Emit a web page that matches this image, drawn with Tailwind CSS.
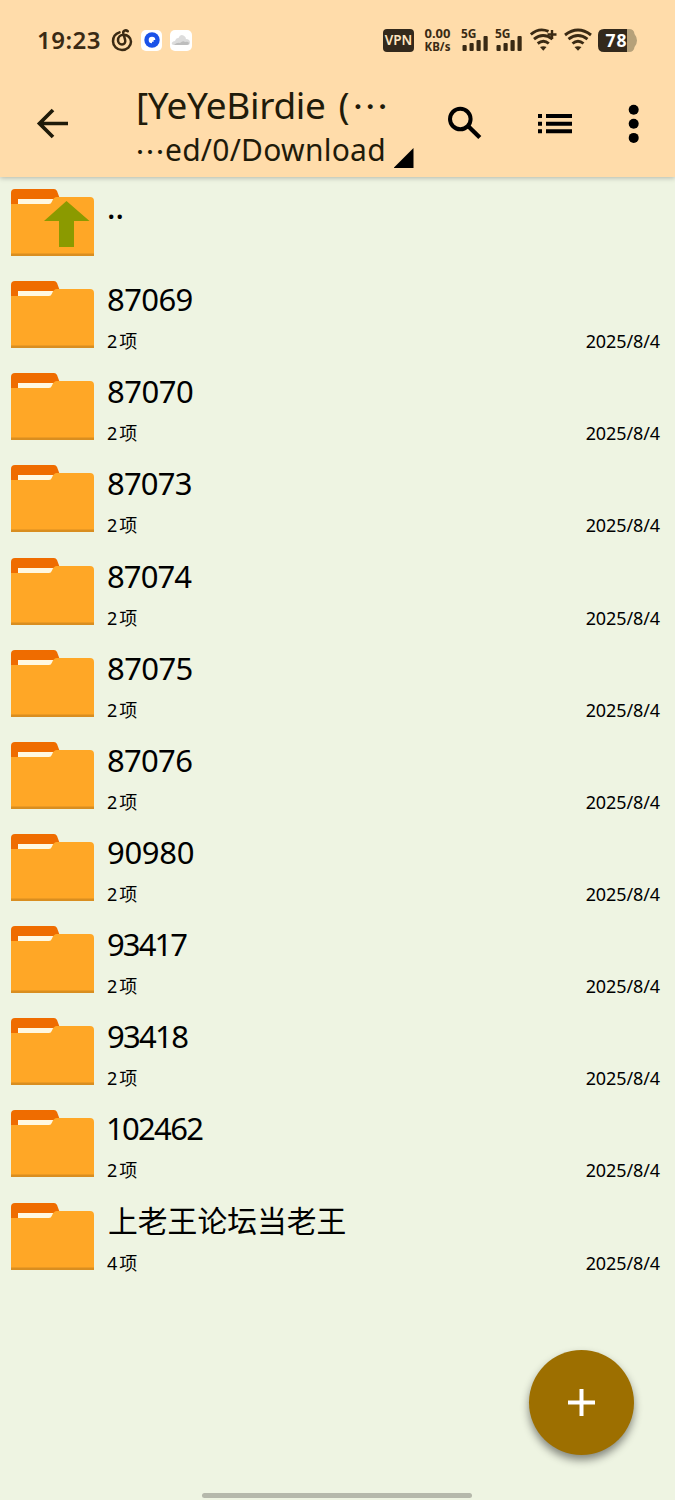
<!DOCTYPE html>
<html lang="zh-CN">
<head>
  <meta charset="UTF-8">
  <meta name="viewport" content="width=device-width, initial-scale=1.0">
  <title>Download</title>
  <script src="https://cdn.jsdelivr.net/npm/@tailwindcss/browser@4"></script>
</head>
<body class="bg-[#eef4e2] font-['Noto_Sans','Noto_Sans_CJK_SC',sans-serif] text-black">
  <div class="relative flex h-[1500px] w-[675px] flex-col overflow-hidden">

    <header class="h-[177px] shrink-0 bg-[#ffdcaa] text-[#1f1b0a] shadow-[0_1px_5px_rgba(0,0,0,0.25)]">
      <!-- Status bar -->
      <div class="flex h-20 items-center pl-[37px] text-[#3a2a14]">
        <span class="w-[74px] whitespace-nowrap text-[24px] font-semibold leading-8 tracking-[0.5px]">19:23</span>
        <svg class="h-[24px] w-[22px] shrink-0" viewBox="0 0 22 24" fill="none" stroke="currentColor" stroke-width="2.5" stroke-linecap="round">
          <path d="M8.500 4.400C4.500 5.700 2 9 2 13.200C2 18.200 6 22 11 22S20 18.300 20 13.800C20 9.600 16.500 6.800 12.800 6.800C9.300 6.800 7 9.300 7 12.200C7 14.600 8.700 16.500 11 16.500S14.700 14.800 14.200 12.300L12.300 5.200C11.800 3 14.500 1.400 16.800 3.200" />
        </svg>
        <div class="ml-[8px] flex h-[21px] w-[21px] items-center justify-center rounded-[5px] bg-white">
          <svg class="h-4 w-4" viewBox="0 0 16 16"><circle cx="8" cy="8" r="7.700" fill="#1a52e8" /><path d="M8 4.700A3.300 3.300 0 1 0 8 11.300V9.800H9.600V8H11.300A3.300 3.300 0 0 0 8 4.700Z" fill="#fff" /></svg>
        </div>
        <div class="ml-2 flex h-[21px] w-[22px] items-center justify-center rounded-[5px] bg-white">
          <svg class="h-3 w-5" viewBox="0 0 20 12"><path d="M3 11Q0 10.500 1 8.500Q2 7 4 7Q5 3.500 7.500 4Q9 0 12.500 1.500Q15 2.500 15 5Q19 5 19 8.500Q19 11 16 11Z" fill="#dcdcdc" /><path d="M3 11Q6 8 9 9Q12 6 14 8Q17 7 18 9Q18 11 16 11Z" fill="#bdbdbd" /></svg>
        </div>

        <div class="ml-[191px] flex h-[23px] w-[31px] items-center justify-center rounded-[4px] bg-[#33291c] text-[13.5px] font-semibold text-[#ffe6c2]">VPN</div>
        <div class="ml-2 w-[31px] whitespace-nowrap text-center font-bold leading-[14px]">
          <div class="text-[13px]">0.00</div>
          <div class="text-[11.5px]">KB/s</div>
        </div>
        <svg class="ml-[8px] h-6 w-[28px] shrink-0 overflow-visible" viewBox="0 0 28 24" fill="currentColor">
          <text x="0" y="10" font-size="12" font-weight="700" textLength="15.500" lengthAdjust="spacingAndGlyphs">5G</text>
          <rect x="1.500" y="17" width="4.200" height="6" rx="1" /><rect x="8.500" y="15" width="4.200" height="8" rx="1" /><rect x="15.500" y="12" width="4.200" height="11" rx="1" /><rect x="22.500" y="8" width="4.200" height="15" rx="1" />
        </svg>
        <svg class="ml-1.5 h-6 w-[28px] shrink-0 overflow-visible" viewBox="0 0 28 24" fill="currentColor">
          <text x="0" y="10" font-size="12" font-weight="700" textLength="15.500" lengthAdjust="spacingAndGlyphs">5G</text>
          <rect x="1.500" y="17" width="4.200" height="6" rx="1" /><rect x="8.500" y="15" width="4.200" height="8" rx="1" /><rect x="15.500" y="12" width="4.200" height="11" rx="1" /><rect x="22.500" y="8" width="4.200" height="15" rx="1" />
        </svg>
        <svg class="ml-[7px] h-6 w-[28px] shrink-0" viewBox="0 0 28 24" fill="none" stroke="currentColor" stroke-width="2.900">
          <path d="M.8 6.500Q9 -.8 18.500 3.400M4 11.200Q13 3.800 22.500 11.200M7.700 15.500Q13.500 11 18.800 15.500" />
          <path d="M17.500 6.500H26.500M22 2V11" stroke-width="2.400" />
          <path d="M10 19Q13.500 17.300 16.500 19L13.300 22.800Z" fill="currentColor" stroke="none" />
        </svg>
        <svg class="ml-1.5 h-6 w-[28px] shrink-0" viewBox="0 0 28 24" fill="none" stroke="currentColor" stroke-width="2.900">
          <path d="M1 7Q14 -3 27 7M4.500 11.200Q14 3.800 23.500 11.200M8.500 15.500Q14 11 19.500 15.500" />
          <path d="M10.500 19Q14 17.300 17.500 19L14 22.800Z" fill="currentColor" stroke="none" />
        </svg>
        <svg class="ml-1.5 h-[23px] w-[40px] shrink-0" viewBox="0 0 40 23">
          <path d="M6 0H29V23H6Q0 23 0 17V6Q0 0 6 0Z" fill="#33291c" />
          <path d="M29 0H31Q36 0 36.500 5Q39 8 39 11.500T36.500 18Q36 23 31 23H29Z" fill="#b6a179" />
          <text x="7.500" y="17.700" font-size="17.500" font-weight="700" fill="#fff" textLength="21">78</text>
        </svg>
      </div>

      <!-- App bar -->
      <div class="flex h-[97px] items-start">
        <svg class="mt-[27px] ml-[36px] h-8 w-8 shrink-0" viewBox="0 0 32 32" fill="none" stroke="currentColor" stroke-width="3.700"><path d="M32 16.500H4M17 3L3.500 16.500L17 30" /></svg>
        <div class="ml-[68px] w-[258px] whitespace-nowrap">
          <div class="mt-[3px] flex h-[44px] items-center text-[37px] leading-[44px]"><span class="tracking-[-0.35px]">[YeYeBirdie</span><span class="ml-[13px]">(</span><span class="ml-[2px] font-['Noto_Sans_CJK_SC']">…</span></div>
          <div class="mt-px flex h-[44px] items-center text-[30px] leading-[44px]"><span class="-ml-[1px] font-['Noto_Sans_CJK_SC']">…</span><span class="tracking-[0.25px]">ed/0/Download</span></div>
        </div>
        <svg class="mt-[68px] h-5 w-5 shrink-0" viewBox="0 0 20 20"><path d="M19.500 0V20H-.5Z" fill="#000" /></svg>
        <svg class="mt-[26px] ml-[34px] h-[34px] w-[34px] shrink-0" viewBox="0 0 34 34" fill="none" stroke="#000"><circle cx="12.300" cy="13" r="10.300" stroke-width="4" /><path d="M20 20L31.800 31.500" stroke-width="4.300" /></svg>
        <svg class="mt-[34px] ml-[56px] h-5 w-[34px] shrink-0" viewBox="0 0 34 20"><path d="M0 0H4V4H0ZM8 0H34V4H8ZM0 7.700H4V11.700H0ZM8 7.700H34V11.700H8ZM0 15.300H4V19.300H0ZM8 15.300H34V19.300H8Z" /></svg>
        <svg class="mt-[24px] ml-[56px] h-10 w-3 shrink-0" viewBox="0 0 12 40"><circle cx="5.700" cy="5.700" r="5" /><circle cx="5.700" cy="19.800" r="5" /><circle cx="5.700" cy="33.900" r="5" /></svg>
      </div>
    </header>

    <!-- File list -->
    <main id="fileList" class="pt-1"></main>

    <button class="absolute top-[1350px] left-[529px] flex h-[105px] w-[105px] items-center justify-center rounded-full bg-[#9d6f00] shadow-[0_5px_9px_rgba(0,0,0,0.45)]">
      <svg class="h-[27px] w-[27px]" viewBox="0 0 27 27"><path d="M11.500 0H15.500V11.500H27V15.500H15.500V27H11.500V15.500H0V11.500H11.500Z" fill="#fff" /></svg>
    </button>

    <!-- Gesture bar -->
    <div class="absolute bottom-[2px] left-[202px] h-[5px] w-[270px] rounded-full bg-[#b5b8ab]"></div>
  </div>

  <script>
    const files = [
      { name: '..', up: true, cls: 'text-[31px] font-medium' },
      { name: '87069', count: 2, cls: 'text-[31px] tracking-[-0.6px]' },
      { name: '87070', count: 2, cls: 'text-[31px] tracking-[-0.5px]' },
      { name: '87073', count: 2, cls: 'text-[31px] tracking-[-0.8px]' },
      { name: '87074', count: 2, cls: 'text-[31px] tracking-[-0.9px]' },
      { name: '87075', count: 2, cls: 'text-[31px] tracking-[-0.6px]' },
      { name: '87076', count: 2, cls: 'text-[31px] tracking-[-0.7px]' },
      { name: '90980', count: 2, cls: 'text-[31px] tracking-[-0.3px]' },
      { name: '93417', count: 2, cls: 'text-[31px] tracking-[-1.9px]' },
      { name: '93418', count: 2, cls: 'text-[31px] tracking-[-1.7px]' },
      { name: '102462', count: 2, cls: 'text-[31px] -ml-px tracking-[-1.7px]' },
      { name: '上老王论坛当老王', count: 4, cls: 'text-[29.8px] pl-px' },
    ];

    const arrow = '<path d="M55.500 12L78.500 32H63V58H48V32H33Z" fill="#8b9a00"/>';

    document.getElementById('fileList').innerHTML = files.map(f => `
      <div class="flex h-[92.15px] pl-[11px] pr-[15px]">
        <svg class="mt-2 h-[67px] w-[83px] shrink-0" viewBox="0 0 83 67">
          <path d="M0 18V4Q0 0 4 0H43Q45 0 46 2L49 10V18Z" fill="#ef6c00"/>
          <path d="M7 10H44L40 17H7Z" fill="#fff8e1"/>
          <path d="M0 15H38Q40 15 41 12.500Q42.500 8 46 8H79Q83 8 83 12V67H0Z" fill="#ffa726"/>
          <path d="M0 64.500H83V67H0Z" fill="#d98e20"/>
          ${f.up ? arrow : ''}
        </svg>
        <div class="ml-[13px] flex-1">
          <div class="mt-[5px] h-[42px] whitespace-nowrap leading-[42px] ${f.cls}">${f.name}</div>
          ${f.up ? '' : `
          <div class="mt-[9px] flex h-6 items-center justify-between text-[18px] leading-6">
            <span class="flex gap-[2px]"><span>${f.count}</span><span>项</span></span>
            <span class="tracking-[-0.1px]">2025/8/4</span>
          </div>`}
        </div>
      </div>`).join('');
  </script>
</body>
</html>
